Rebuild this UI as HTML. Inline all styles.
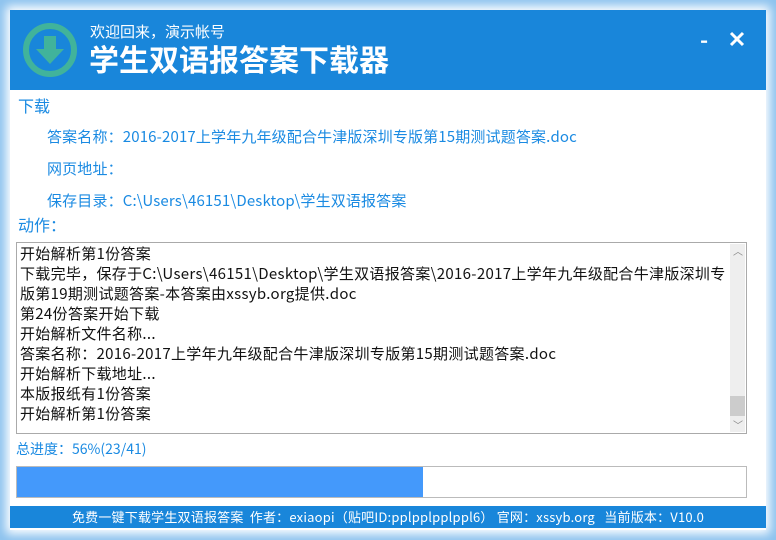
<!DOCTYPE html>
<html><head><meta charset="utf-8"><style>
*{margin:0;padding:0;box-sizing:border-box}
body{width:776px;height:540px;background:#fff;position:relative;overflow:hidden;font-family:"Noto Sans CJK SC","Liberation Sans",sans-serif}
.glow{position:absolute;left:0;top:0;width:776px;height:540px;background:#fff;box-shadow:inset 0 0 10px 6px #8cc2ee}
.win{position:absolute;left:10px;top:10px;width:756px;height:520px;background:#fff}
.hdr{position:absolute;left:0;top:0;width:756px;height:80px;background:#1986da}
.t{position:absolute;white-space:nowrap;line-height:1}
.b{color:#1a8ae2}
.ls{letter-spacing:0.15px}
.box{position:absolute;left:6px;top:232px;width:731px;height:192px;border:1px solid #aaa;background:#fff}
.box .t{color:#111;font-size:15px;left:3px;letter-spacing:0.3px}
.sb{position:absolute;right:1px;top:1px;width:15px;height:188px;background:#eee}
.thumb{position:absolute;left:0;top:152px;width:15px;height:20px;background:#ccc}
.pb{position:absolute;left:6px;top:456px;width:731px;height:32px;border:1px solid #bbb}
.pf{position:absolute;left:0;top:0;width:406px;height:30px;background:#4499fb}
.ft{position:absolute;left:0;top:496px;width:756px;height:22px;background:#1986da;color:#fff;font-size:13px;letter-spacing:0.2px;text-align:center;line-height:22px}
</style></head><body>
<div class="glow"></div>
<div class="win">
<div class="hdr">
<svg style="position:absolute;left:10px;top:10px" width="60" height="60" viewBox="0 0 60 60"><circle cx="30" cy="30" r="24" fill="none" stroke="#41b39b" stroke-width="6"/><path d="M24 16h12v13h8L30 44 16 29h8z" fill="#41b39b"/></svg>
<div class="t" style="left:80px;top:14px;color:#fff;font-size:15px">欢迎回来，演示帐号</div>
<div class="t" style="left:79px;top:33px;color:#fff;font-size:30px;font-weight:bold">学生双语报答案下载器</div>
<div class="t" style="left:690px;top:18px;color:#fff;font-size:22px;font-weight:bold">-</div>
<svg style="position:absolute;left:719px;top:21px" width="16" height="16"><path d="M2 2L14 14M14 2L2 14" stroke="#fff" stroke-width="3"/></svg>
</div>
<div class="t b" style="left:8px;top:87px;font-size:16px">下载</div>
<div class="t b ls" style="left:37px;top:119px;font-size:15px">答案名称：2016-2017上学年九年级配合牛津版深圳专版第15期测试题答案.doc</div>
<div class="t b ls" style="left:37px;top:151px;font-size:15px">网页地址：</div>
<div class="t b ls" style="left:37px;top:183px;font-size:15px">保存目录：C:\Users\46151\Desktop\学生双语报答案</div>
<div class="t b" style="left:8px;top:206px;font-size:16px">动作：</div>
<div class="box">
<div class="t" style="top:3px">开始解析第1份答案</div>
<div class="t" style="top:23px">下载完毕，保存于C:\Users\46151\Desktop\学生双语报答案\2016-2017上学年九年级配合牛津版深圳专</div>
<div class="t" style="top:43px">版第19期测试题答案-本答案由xssyb.org提供.doc</div>
<div class="t" style="top:63px">第24份答案开始下载</div>
<div class="t" style="top:83px">开始解析文件名称...</div>
<div class="t" style="top:103px">答案名称：2016-2017上学年九年级配合牛津版深圳专版第15期测试题答案.doc</div>
<div class="t" style="top:123px">开始解析下载地址...</div>
<div class="t" style="top:143px">本版报纸有1份答案</div>
<div class="t" style="top:163px">开始解析第1份答案</div>
<div class="sb"><div class="t" style="left:3px;top:2px;color:#888;font-size:10px;letter-spacing:0">︿</div><div class="thumb"></div><div class="t" style="left:3px;top:176px;color:#888;font-size:10px;letter-spacing:0">﹀</div></div>
</div>
<div class="t b" style="left:6px;top:432px;font-size:14px">总进度：56%(23/41)</div>
<div class="pb"><div class="pf"></div></div>
<div class="ft">免费一键下载学生双语报答案&nbsp; 作者：exiaopi（贴吧ID:pplpplpplppl6）&nbsp;官网：xssyb.org&nbsp;&nbsp; 当前版本：V10.0</div>
</div>
</body></html>
